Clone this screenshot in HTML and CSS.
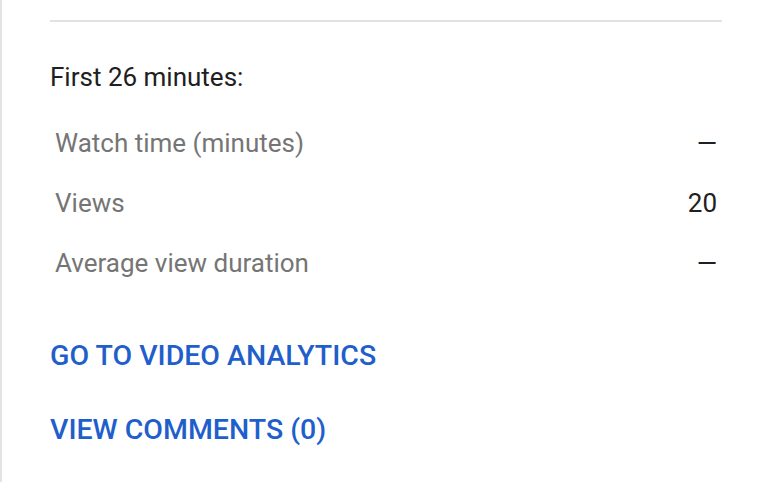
FILE: index.html
```html
<!DOCTYPE html>
<html lang="en">
<head>
    <title>Video stats</title>
    <link rel="stylesheet" href="styles.css">
</head>
<body>
    <div class="panel">
        <div class="divider"></div>
        <div class="period">First 26 minutes:</div>
        <div class="stats">
            <div class="row"><span class="label">Watch time (minutes)</span><span class="value">&mdash;</span></div>
            <div class="row"><span class="label">Views</span><span class="value">20</span></div>
            <div class="row"><span class="label">Average view duration</span><span class="value">&mdash;</span></div>
        </div>
        <div class="links">
            <a class="link" href="#">GO TO VIDEO ANALYTICS</a>
            <a class="link" href="#">VIEW COMMENTS (0)</a>
        </div>
    </div>
</body>
</html>
```

FILE: styles.css
```css
body {
    margin: 0;
    background: #fff;
    font-family: Roboto, "Liberation Sans", sans-serif;
}
.panel {
    border-left: 2px solid #e3e3e3;
    height: 482px;
    box-sizing: border-box;
    padding: 20px 42px 0 48px;
}
.divider {
    height: 2px;
    background: #e2e2e2;
}
.period {
    margin-top: 40px;
    line-height: 30px;
    font-size: 26px;
    color: #202020;
}
.stats {
    margin-top: 21px;
    padding: 0 5px;
}
.row {
    display: flex;
    justify-content: space-between;
    align-items: center;
    height: 60px;
    font-size: 26px;
}
.label {
    color: #757575;
}
.value {
    color: #202020;
}
.links {
    margin-top: 25px;
    display: flex;
    flex-direction: column;
}
.link {
    display: flex;
    align-items: center;
    height: 74px;
    font-size: 28.5px;
    font-weight: 500;
    color: #1f5fcc;
    text-decoration: none;
}
```
